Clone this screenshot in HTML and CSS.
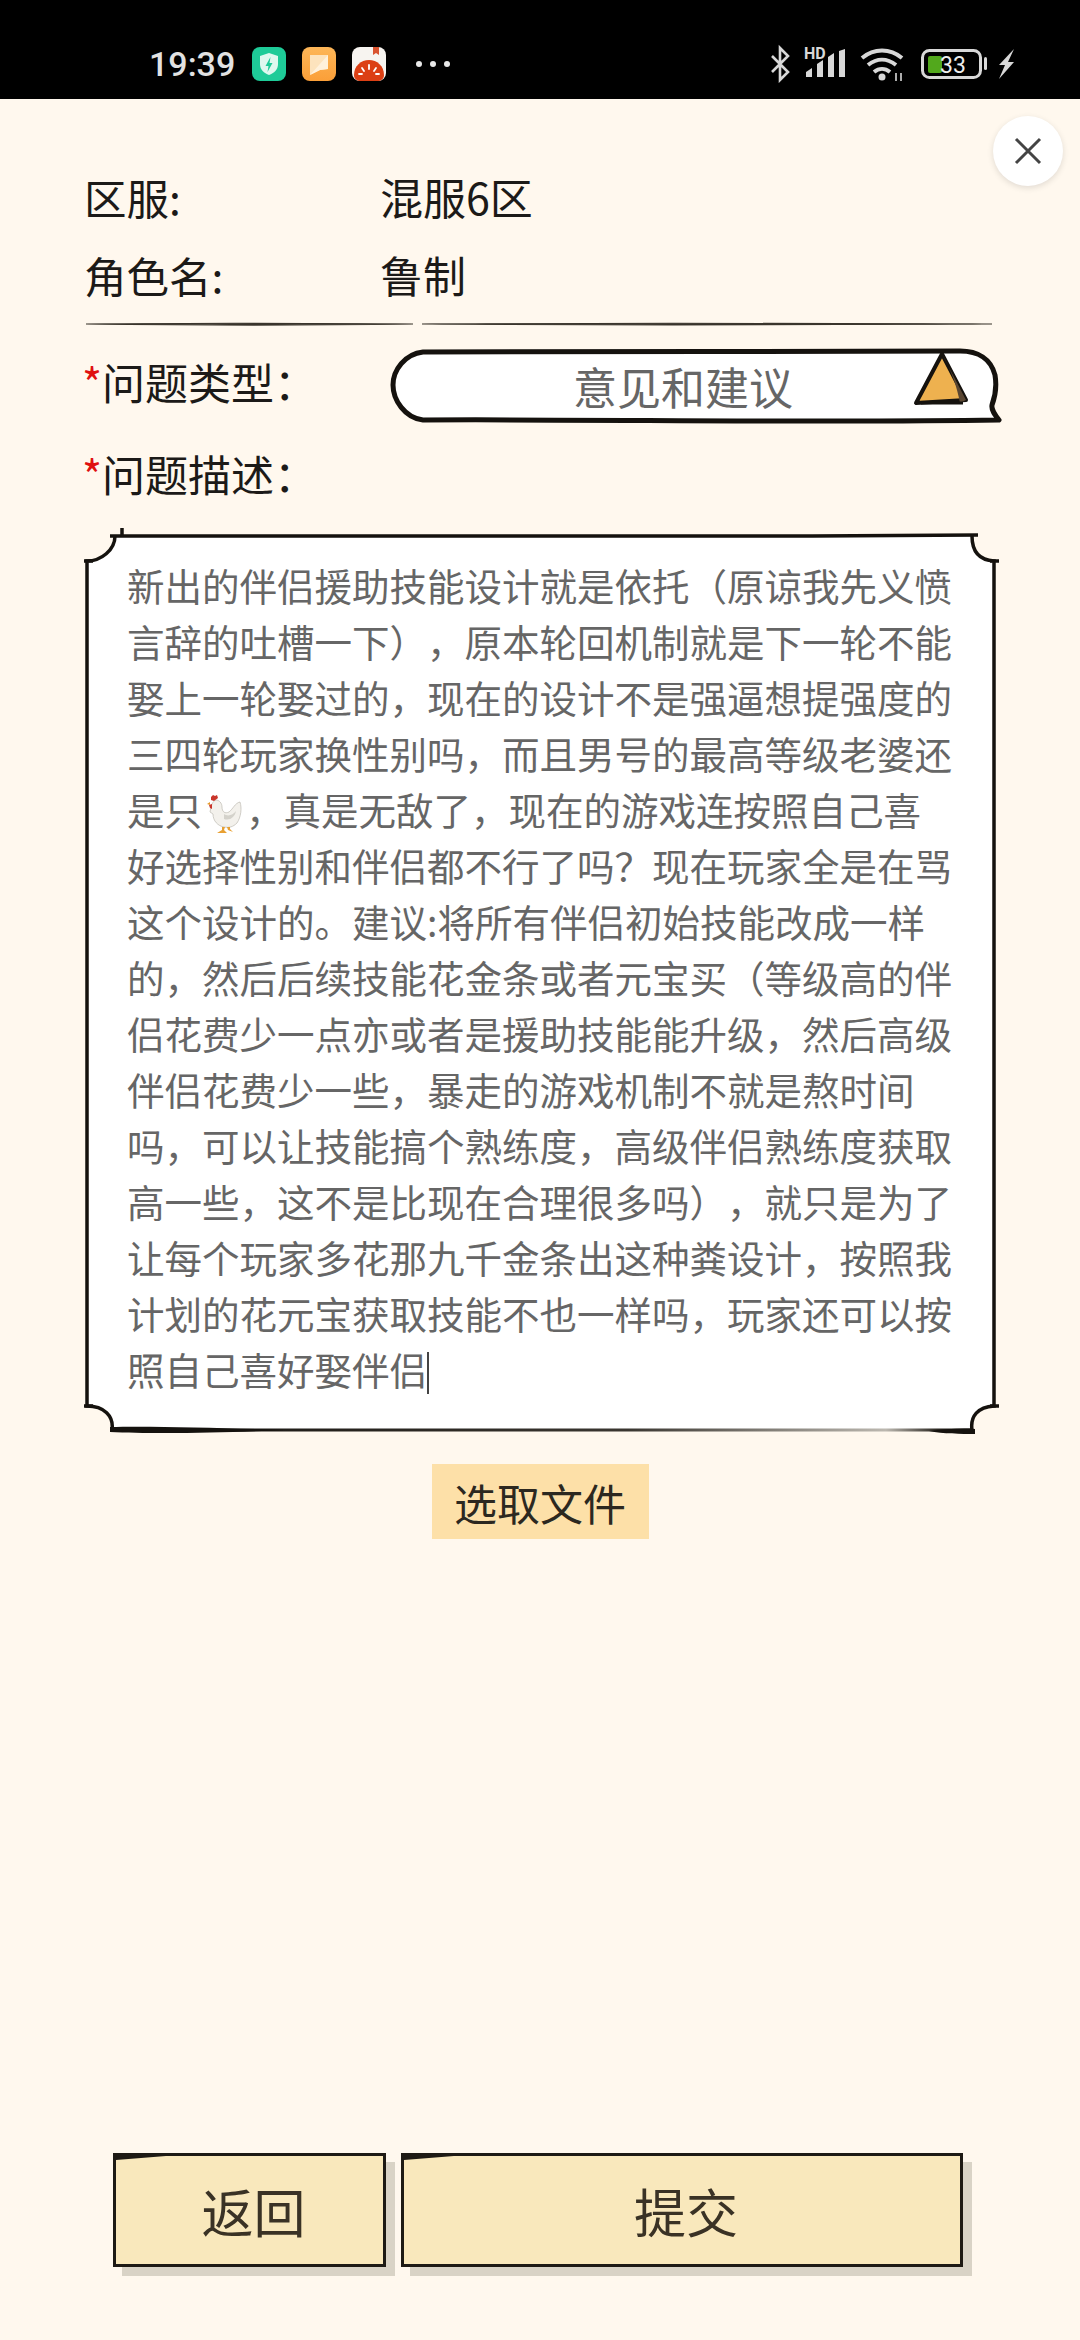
FILE: index.html
```html
<!DOCTYPE html>
<html lang="zh-CN">

<head>
    <meta charset="UTF-8">
    <meta name="viewport" content="width=device-width, initial-scale=1.0">
    <title>问题反馈</title>
    <link rel="stylesheet" href="styles.css">
</head>

<body>
    <div class="statusbar">
        <div class="status-left">
            <span class="time">19:39</span>
            <svg class="app-icon" viewBox="0 0 34 34">
                <rect width="34" height="34" rx="8" fill="#1ecb98" />
                <path d="M17 6l9 3v8c0 6-4 9-9 11-5-2-9-5-9-11V9z" fill="#dff8ef" />
                <path d="M18.500 10l-5 9h3l-1 6 5-9h-3z" fill="#1ecb98" />
            </svg>
            <svg class="app-icon" viewBox="0 0 34 34">
                <defs>
                    <linearGradient id="noteBg" x1="0" y1="0" x2="0" y2="1">
                        <stop offset="0" stop-color="#fdb658" />
                        <stop offset="1" stop-color="#fb9f38" />
                    </linearGradient>
                </defs>
                <rect width="34" height="34" rx="8" fill="url(#noteBg)" />
                <path d="M8 8h18v14l-8 1-10 5z" fill="#fde3bd" />
                <path d="M8 28l18-20v14l-8 1z" fill="#fff1dc" />
            </svg>
            <svg class="app-icon" viewBox="0 0 34 34">
                <rect width="34" height="34" rx="8" fill="#f7f4f0" />
                <path d="M21 0h6v8l-3-2-3 2z" fill="#d9532f" />
                <path d="M2 28c0-9 7-15 15-15s15 6 15 15c0 4-3 6-7 6H9c-4 0-7-2-7-6z" fill="#dc3f14" />
                <path d="M17 18v4M10 21l2 3M24 21l-2 3M7 27h3M27 27h-3" stroke="#fff" stroke-width="1.800" stroke-linecap="round" />
            </svg>
            <div class="dots"><i></i><i></i><i></i></div>
        </div>
        <svg class="status-right" width="246" height="41" viewBox="0 -5 246 41">
            <!-- bluetooth -->
            <path d="M4 9l16 16-8 8V1l8 8L4 25" fill="none" stroke="#d8d8d8" stroke-width="2.600" />
            <!-- signal -->
            <text x="36" y="12" class="hd">HD</text>
            <path d="M38 30v-5l6-4v9zM49 30V17l6-4v17zM60 30V10l6-4v24zM71 30V4l6-2v28z" fill="#d8d8d8" />
            <!-- wifi -->
            <path d="M94 11c12-10 28-10 40 0M100 18c9-7 19-7 28 0M106 25c5-4 11-4 16 0" fill="none" stroke="#d8d8d8" stroke-width="4" />
            <circle cx="114" cy="30" r="3.500" fill="#d8d8d8" />
            <path d="M128 26v8M133 26v8" stroke="#d8d8d8" stroke-width="1.600" />
            <!-- battery -->
            <rect x="154.500" y="3.500" width="58" height="27" rx="7" fill="none" stroke="#d8d8d8" stroke-width="3" />
            <rect x="160" y="9" width="14" height="17" rx="2" fill="#52a81c" />
            <text x="172" y="26" class="batt">33</text>
            <rect x="216" y="10" width="3" height="13" rx="1.500" fill="#d8d8d8" />
            <!-- charging -->
            <path d="M246 2l-15 16h6l-6 14 15-17h-6z" fill="#d8d8d8" />
        </svg>
    </div>

    <main class="page">
        <button class="close">
            <svg width="28" height="28" viewBox="0 0 28 28">
                <path d="M2 2l24 24M26 2L2 26" stroke="#444" stroke-width="3" />
            </svg>
        </button>

        <div class="info">
            <div class="info-row"><span class="info-key">区服:</span><span>混服6区</span></div>
            <div class="info-row"><span class="info-key">角色名:</span><span>鲁制</span></div>
        </div>
        <svg class="divider" width="930" height="6" viewBox="0 0 930 6">
            <path d="M2 3C100 2 240 2 329 3 240 4.200 100 4.200 2 3z" fill="#3a352c" stroke="#3a352c" stroke-width="1.200" />
            <path d="M338 3C500 2 800 2 908 3 800 4.200 500 4.200 338 3z" fill="#3a352c" stroke="#3a352c" stroke-width="1.200" />
        </svg>

        <div class="type-row">
            <label class="label label-type"><em>*</em>问题类型：</label>
            <div class="select">
                <svg class="select-bg" width="612" height="76" viewBox="0 0 612 76">
                    <path d="M33 4C200 2 400 5 570 3c18 0 31 8 35 24 2 12 0 22-3 30-1 5 3 10 7 15C420 75 200 71 33 72 15 70 3 52 3 37 3 22 15 6 33 4z" fill="#fff" stroke="#15120e" stroke-width="5" stroke-linejoin="round" />
                    <path d="M552 6l-26 49 50-3z" fill="#eeb14f" stroke="#15120e" stroke-width="4" stroke-linejoin="round" />
                    <path d="M552 6l24 46-6 3c-3-16-9-34-18-49z" fill="#5a4632" />
                    <path d="M531 55l42 0" stroke="#15120e" stroke-width="3" />
                </svg>
                <span class="select-text">意见和建议</span>
            </div>
        </div>

        <label class="label label-desc"><em>*</em>问题描述：</label>

        <div class="desc">
            <svg class="desc-bg" width="916" height="912" viewBox="0 0 916 912">
                <defs>
                    <linearGradient id="bottomInk" gradientUnits="userSpaceOnUse" x1="28" y1="0" x2="888" y2="0">
                        <stop offset="0" stop-color="#15120e" />
                        <stop offset=".6" stop-color="#3a3630" />
                        <stop offset=".9" stop-color="#bcb8b0" />
                        <stop offset=".96" stop-color="#2a2620" />
                        <stop offset="1" stop-color="#15120e" />
                    </linearGradient>
                </defs>
                <path class="desc-fill" d="M31 8H888c0 14 6 24 22 25V878c-16 1-24 10-22 24H28c2-14-8-24-25-24V33c14 0 28-11 28-25z" />
                <path class="desc-ink" d="M888 8c0 14 6 24 22 25V878c-16 1-24 10-22 24M28 902c2-14-8-24-25-24V33c14 0 28-11 28-25" />
                <path class="desc-ink" d="M26 8C300 5 600 10 894 7" stroke-width="4.500" />
                <path class="desc-bottom" d="M28 902H888" />
                <path class="desc-wedge" d="M26 904l0-5C70 898 140 900 200 902 140 905 70 906 26 904zM845 903c15-2 35-3 46-2l0 5c-14 0-32 0-46-3z" />
                <path class="desc-ink" d="M38 0v9M0 33h9M906 33h9M0 878h9M906 878h9" />
            </svg>
            <p class="desc-text">新出的伴侣援助技能设计就是依托（原谅我先义愤言辞的吐槽一下），原本轮回机制就是下一轮不能娶上一轮娶过的，现在的设计不是强逼想提强度的三四轮玩家换性别吗，而且男号的最高等级老婆还是只<svg class="chicken" width="36" height="40" viewBox="0 0 36 40">
                    <path d="M10 6c3 0 6 3 6 7 0 5 3 7 7 5 4-3 6-9 11-10 2 6 1 15-3 21-4 4-8 5-13 4-6-1-11-6-11-13l-3-2c1-5 2-11 6-12z" fill="#f3f1ec" stroke="#bdbab2" stroke-width=".7" />
                    <path d="M18 20c4 3 9 1 12-3-1 6-6 10-12 8z" fill="#d4d2cb" />
                    <path d="M5 3l2-2 2 1 2-1 1 3-4 3-3-1zM3 11l3-1v5l-2-1z" fill="#c9362b" />
                    <path d="M1 10l3-2v3z" fill="#e59a2c" />
                    <path d="M16 33v3l-5 3h10l-3-3 1-3zM21 33l1 3 5 2-3-3v-2z" fill="#e8a032" />
                </svg>，真是无敌了，现在的游戏连按照自己喜好选择性别和伴侣都不行了吗？现在玩家全是在骂这个设计的。建议:将所有伴侣初始技能改成一样的，然后后续技能花金条或者元宝买（等级高的伴侣花费少一点亦或者是援助技能能升级，然后高级伴侣花费少一些，暴走的游戏机制不就是熬时间吗，可以让技能搞个熟练度，高级伴侣熟练度获取高一些，这不是比现在合理很多吗），就只是为了让每个玩家多花那九千金条出这种粪设计，按照我计划的花元宝获取技能不也一样吗，玩家还可以按照自己喜好娶伴侣<span class="caret"></span></p>
        </div>

        <div class="file-row"><button class="file-btn">选取文件</button></div>

        <div class="actions">
            <button class="action action-back">返回</button>
            <button class="action action-submit">提交</button>
        </div>
    </main>
</body>

</html>
```

FILE: styles.css
```css
* {
    margin: 0;
    padding: 0;
    box-sizing: border-box;
}

html,
body {
    width: 100%;
    height: 100%;
    background-color: #fff8ee;
}

body {
    display: flex;
    flex-direction: column;
    font-family: "Noto Sans CJK SC", "Noto Sans", sans-serif;
    color: #1c1a18;
}

button {
    appearance: none;
    border: none;
    outline: none;
    font: inherit;
    color: inherit;
}

/* status bar */
.statusbar {
    height: 99px;
    flex: none;
    background-color: #000;
    display: flex;
    justify-content: space-between;
    align-items: flex-start;
    padding: 47px 66px 0 149px;
}

.status-left {
    display: flex;
    align-items: center;
    height: 34px;
}

.status-right {
    margin-top: -5px;
}

.time {
    width: 103px;
    font-family: Roboto, sans-serif;
    font-weight: 500;
    font-size: 34px;
    line-height: 34px;
    color: #e2e2e2;
}

.app-icon {
    width: 34px;
    height: 34px;
    margin-right: 16px;
}

.dots {
    display: flex;
    gap: 8px;
    margin-left: 14px;
}

.dots i {
    width: 6px;
    height: 6px;
    border-radius: 50%;
    background-color: #e8e8e8;
}

.hd {
    font-family: Roboto, sans-serif;
    font-weight: 700;
    font-size: 16px;
    fill: #d8d8d8;
}

.batt {
    font-family: Roboto, sans-serif;
    font-size: 23px;
    fill: #eee;
}

/* form */
.page {
    position: relative;
    flex: 1;
    display: flex;
    flex-direction: column;
    padding: 0 0 73px 84px;
}

.close {
    position: absolute;
    top: 17px;
    right: 17px;
    width: 70px;
    height: 70px;
    border-radius: 50%;
    background-color: #fff;
    box-shadow: 0 2px 6px rgba(0, 0, 0, 0.12);
    display: flex;
    align-items: center;
    justify-content: center;
}

.info {
    padding-top: 58px;
}

.info-row {
    display: flex;
    height: 78px;
    align-items: center;
    font-size: 43px;
}

.info-key {
    width: 296px;
    font-size: 42.500px;
}

.divider {
    display: block;
    margin-top: 8px;
}

.type-row {
    display: flex;
    align-items: flex-start;
    margin: 21px 0 0 -2px;
}

.label {
    display: block;
    width: 308px;
    font-size: 43px;
    line-height: 60px;
    white-space: nowrap;
}

.label em {
    font-style: normal;
    color: #e01010;
}

.label-type {
    line-height: 66px;
}

.select {
    position: relative;
    width: 612px;
    height: 76px;
    display: flex;
    align-items: center;
    justify-content: center;
}

.select-bg {
    position: absolute;
    left: 0;
    top: 0;
}

.select-text {
    position: relative;
    font-size: 44px;
    color: #666;
    margin-right: 26px;
}

.label-desc {
    margin: 19px 0 0 -2px;
}

.desc {
    position: relative;
    width: 916px;
    height: 912px;
    margin-top: 25px;
    padding: 29px 0 0 43px;
}

.desc-bg {
    position: absolute;
    left: 0;
    top: 0;
}

.desc-fill {
    fill: #fff;
}

.desc-ink {
    fill: none;
    stroke: #15120e;
    stroke-width: 3.500;
}

.desc-bottom {
    fill: none;
    stroke: url(#bottomInk);
    stroke-width: 3;
}

.desc-wedge {
    fill: #15120e;
}

.desc-text {
    position: relative;
    width: 826px;
    font-size: 37.500px;
    line-height: 56px;
    color: #666;
    text-spacing-trim: space-all;
}

.chicken {
    margin: 0 4px;
    vertical-align: -9px;
}

.caret {
    display: inline-block;
    width: 1.500px;
    height: 42px;
    background-color: #444;
    vertical-align: -9px;
}

.file-row {
    width: 912px;
    display: flex;
    justify-content: center;
    margin-top: 24px;
}

.file-btn {
    width: 217px;
    height: 75px;
    background-color: #fde0a8;
    font-size: 43px;
    color: #2c2820;
}

/* bottom buttons */
.actions {
    margin-top: auto;
    display: flex;
    gap: 15px;
    padding-left: 29px;
}

.action {
    position: relative;
    height: 114px;
    padding-left: 8px;
    background-color: #f9e8bc;
    border: 3px solid #1e1a14;
    box-shadow: 9px 9px 0 #d9d3c6;
    font-size: 52px;
    color: #3a3225;
}

/* thicker brush stroke at the top left corner */
.action::before {
    content: "";
    position: absolute;
    left: 0;
    top: 0;
    width: 50px;
    height: 4px;
    background-color: #1e1a14;
    clip-path: polygon(0 0, 100% 0, 0 100%);
}

.action-back {
    width: 273px;
}

.action-submit {
    width: 562px;
}
```
